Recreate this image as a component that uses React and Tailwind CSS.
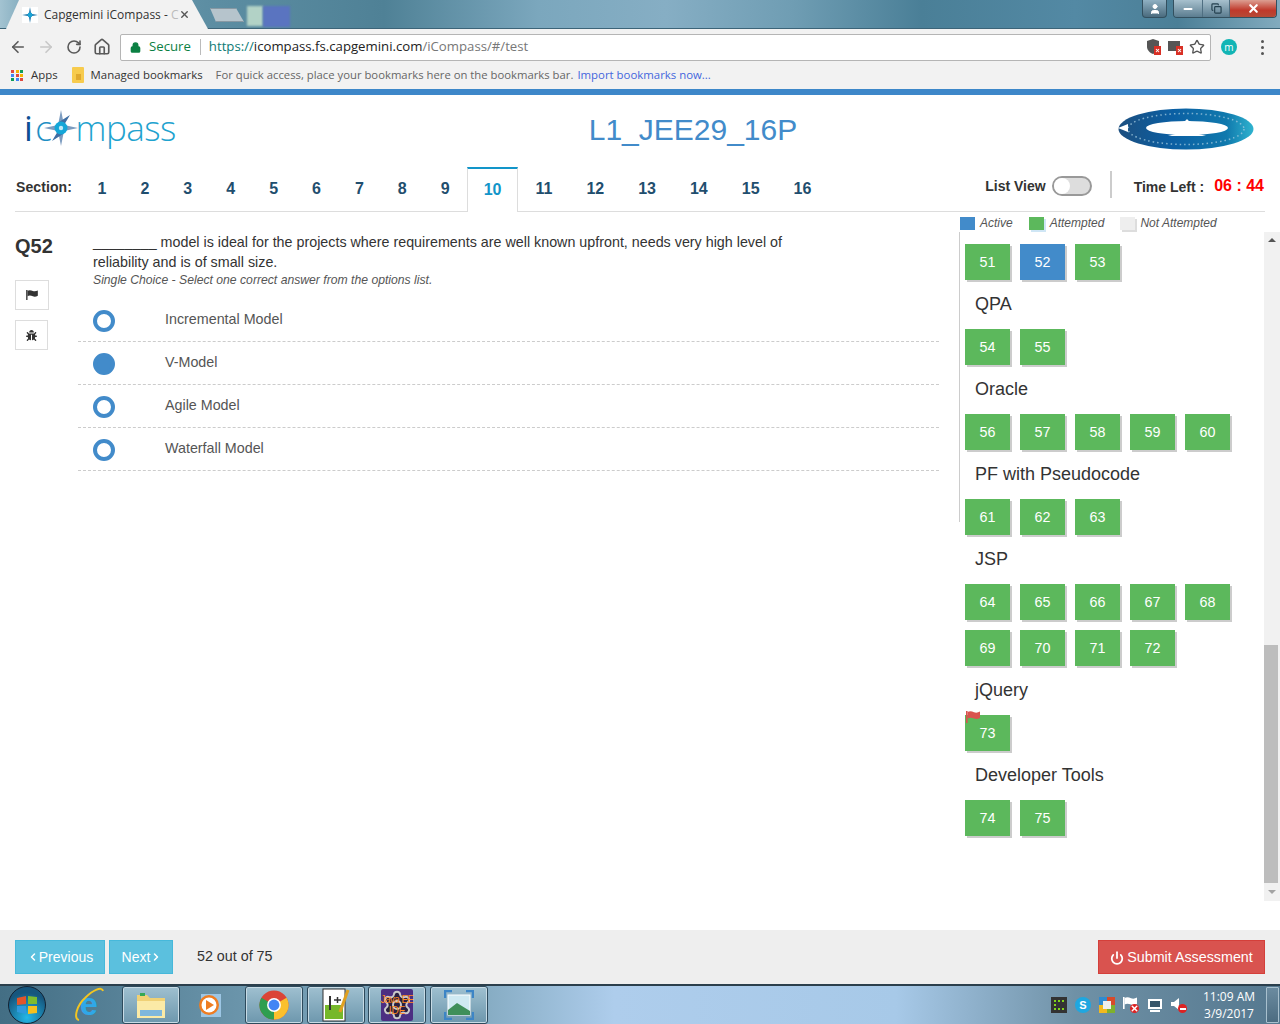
import { ArrowLeft, ArrowRight, RotateCw, House, Lock, Star, Power, ChevronLeft, ChevronRight, User, Minus, X, Copy, Settings } from "lucide-react";
import { FaBug } from "react-icons/fa";

const sectionNumbers = [1, 2, 3, 4, 5, 6, 7, 8, 9, 10, 11, 12, 13, 14, 15, 16];

const options = [
  { label: "Incremental Model", selected: false },
  { label: "V-Model", selected: true },
  { label: "Agile Model", selected: false },
  { label: "Waterfall Model", selected: false },
];

const groups = [
  { rows: [[51, 52, 53]] },
  { title: "QPA", rows: [[54, 55]] },
  { title: "Oracle", rows: [[56, 57, 58, 59, 60]] },
  { title: "PF with Pseudocode", rows: [[61, 62, 63]] },
  { title: "JSP", rows: [[64, 65, 66, 67, 68], [69, 70, 71, 72]] },
  { title: "jQuery", rows: [[73]] },
  { title: "Developer Tools", rows: [[74, 75]] },
];

function ChromeLogo({ size = 30 }) {
  return (
    <svg width={size} height={size} viewBox="0 0 32 32">
      <circle cx="16" cy="16" r="15.5" fill="#db4437" />
      <path d="M16 16 L29.4 8.2 A15.5 15.5 0 0 1 16 31.5 Z" fill="#fbc02d" />
      <path d="M16 16 L16 31.5 A15.5 15.5 0 0 1 2.6 8.2 Z" fill="#2e9e50" />
      <circle cx="16" cy="16" r="7.4" fill="#fff" />
      <circle cx="16" cy="16" r="5.8" fill="#4285f4" />
    </svg>
  );
}

function WavingFlag({ className }) {
  return (
    <svg width="14" height="12" viewBox="0 0 14 12" className={className}>
      <rect x="0" y="0" width="1.6" height="12" fill="currentColor" />
      <path d="M1.6 1 C4 -0.5 6 0.4 8 1.2 C10 2 12 1.6 14 0.6 V7 C12 8 10 8.4 8 7.6 C6 6.8 4 6 1.6 7.4 Z" fill="currentColor" />
    </svg>
  );
}

function ErrorBadge() {
  return (
    <span className="absolute right-0 bottom-0 w-[7px] h-[9px] bg-[#d93025] flex items-center justify-center">
      <X size={5} strokeWidth={5} className="text-white" />
    </span>
  );
}

function TitleBar() {
  return (
    <div className="relative h-[29px] shrink-0 flex bg-[linear-gradient(90deg,#a3c3d1_0%,#7fa9bc_2%,#5d8ea3_16%,#4f8196_30%,#7ba7bd_42%,#86aec4_52%,#6f9db3_62%,#4a7f97_72%,#5389a4_84%,#4b7f97_92%,#82abbe_100%)] border-b border-[#3c6478]">
      <div className="relative ml-[6px] w-[202px] h-[29px] -mb-px bg-[#f2f2f2] [clip-path:polygon(0_100%,13px_0,186px_0,202px_100%)] flex items-center pl-[16px]">
        <span className="shrink-0 w-[16px] h-[16px] bg-white flex items-center justify-center">
          <svg width="16" height="16" viewBox="0 0 16 16">
            <path d="M8 0 L9.3 6.7 L16 8 L9.3 9.3 L8 16 L6.7 9.3 L0 8 L6.7 6.7 Z" fill="#2f7fb0" />
            <circle cx="8" cy="8" r="2.4" fill="#19a5d6" />
          </svg>
        </span>
        <span className="ml-[6px] w-[131px] whitespace-nowrap font-['Open_Sans',sans-serif] text-[12px] text-[#333]">Capgemini iCompass - <span className="text-[#bbb]">C</span></span>
        <X size={11} strokeWidth={3} className="ml-[4px] text-[#555]" />
      </div>
      <div className="ml-[2px] mt-[8px] w-[34px] h-[14px] bg-[#b6c4cc] border border-[#8798a3] [clip-path:polygon(0_0,26px_0,100%_100%,6px_100%)]" />
      <div className="mt-[6px] ml-[3px] w-[16px] h-[20px] bg-[#b2d2c6] blur-[1px]" />
      <div className="mt-[6px] w-[27px] h-[21px] bg-[#5a74c0] blur-[1px]" />
      <div className="ml-auto mr-[3px] flex items-start">
        <div className="w-[25px] h-[18px] rounded-b-[4px] border border-t-0 border-[#33505f] bg-[linear-gradient(180deg,#8fb0c2,#4a6b7e)] flex items-center justify-center mr-[6px]">
          <User size={12} fill="#fff" className="text-white" />
        </div>
        <div className="flex h-[18px] rounded-b-[4px] border border-t-0 border-[#33505f] overflow-hidden">
          <div className="w-[29px] bg-[linear-gradient(180deg,#a7c0cd,#5b7d90)] flex items-center justify-center border-r border-[#4f6f82]">
            <Minus size={12} strokeWidth={4} className="text-white" />
          </div>
          <div className="w-[27px] bg-[linear-gradient(180deg,#a7c0cd,#5b7d90)] flex items-center justify-center border-r border-[#4f6f82]">
            <Copy size={11} strokeWidth={2.5} className="text-[#24404f]" />
          </div>
          <div className="w-[46px] bg-[linear-gradient(180deg,#dc9f92,#c0392b_60%,#b64a36)] flex items-center justify-center">
            <X size={13} strokeWidth={4} className="text-white" />
          </div>
        </div>
      </div>
    </div>
  );
}

function AddressBar() {
  return (
    <div className="h-[34px] pt-[2px] shrink-0 bg-[#f2f2f2] flex items-center pl-[9px]">
      <ArrowLeft size={18} strokeWidth={2.2} className="text-[#5a5a5a]" />
      <ArrowRight size={18} strokeWidth={2.2} className="ml-[10px] text-[#c8c8c8]" />
      <RotateCw size={16} strokeWidth={2.4} className="ml-[11px] text-[#5a5a5a]" />
      <House size={18} strokeWidth={2.2} className="ml-[11px] text-[#5a5a5a]" />
      <div className="ml-[9px] w-[1091px] h-[27px] bg-white border border-[#b5b5b5] rounded-[2px] flex items-center pl-[9px] font-['Open_Sans',sans-serif] text-[13.2px]">
        <Lock size={11} strokeWidth={3} fill="#0b8043" className="text-[#0b8043]" />
        <span className="ml-[8px] text-[#0b8043]">Secure</span>
        <span className="ml-[9px] w-px h-[16px] bg-[#bbb]" />
        <span className="ml-[8px] text-[#0b7a75]">https://<span className="text-[#222]">icompass.fs.capgemini.com</span><span className="text-[#777]">/iCompass/#/test</span></span>
        <div className="ml-auto mr-[5px] flex items-center gap-[6px]">
          <div className="relative w-[14px] h-[16px]">
            <svg width="12" height="15" viewBox="0 0 12 15"><path d="M6 0 L12 2 V8 C12 11 9 14 6 15 C3 14 0 11 0 8 V2 Z" fill="#555" /></svg>
            <ErrorBadge />
          </div>
          <div className="relative w-[15px] h-[16px] ml-[1px]">
            <span className="absolute left-0 top-[2px] w-[12px] h-[10px] bg-[#555]" />
            <ErrorBadge />
          </div>
          <Star size={16} strokeWidth={2} className="text-[#555]" />
        </div>
      </div>
      <div className="ml-[10px] w-[16px] h-[16px] rounded-full bg-[#12b5b5] flex items-center justify-center text-[10px] leading-none text-white font-['Open_Sans',sans-serif]">m</div>
      <div className="ml-[24px] flex flex-col gap-[3px]">
        <span className="w-[3px] h-[3px] bg-[#555] rounded-full" />
        <span className="w-[3px] h-[3px] bg-[#555] rounded-full" />
        <span className="w-[3px] h-[3px] bg-[#555] rounded-full" />
      </div>
    </div>
  );
}

function BookmarksBar() {
  const colors = ["#e04a3f", "#f4b400", "#0f9d58", "#4285f4", "#e04a3f", "#f4b400", "#0f9d58", "#4285f4", "#e04a3f"];
  return (
    <div className="h-[26px] pb-[2px] shrink-0 bg-[#f2f2f2] flex items-center pl-[11px] font-['Open_Sans',sans-serif] text-[11.4px] text-[#333]">
      <div className="grid grid-cols-3 gap-px w-[13px]">
        {colors.map((c, i) => (
          <span key={i} className="w-[3px] h-[3px]" style={{ backgroundColor: c }} />
        ))}
      </div>
      <span className="ml-[7px]">Apps</span>
      <svg width="12" height="16" viewBox="0 0 12 16" className="ml-[14px]">
        <rect width="12" height="16" rx="1" fill="#f7cb4d" />
        <rect x="4" y="7" width="5" height="6" fill="#e0a92e" />
      </svg>
      <span className="ml-[7px]">Managed bookmarks</span>
      <span className="ml-[13px] text-[11.3px] text-[#666]">For quick access, place your bookmarks here on the bookmarks bar.</span>
      <span className="ml-[4px] text-[#4466dd]">Import bookmarks now...</span>
    </div>
  );
}

function Logo() {
  return (
    <div className="-mt-[3px] flex items-center font-['Open_Sans',sans-serif] font-light text-[35px] leading-none text-[#1fa3cf] tracking-[-0.5px]">
      <span className="text-[#0d4f94] font-normal">i</span>
      <span className="ml-[3px] text-[#1f8fc4]">c</span>
      <svg width="34" height="36" viewBox="0 0 34 36" className="-ml-[7px] -mr-[3px] shrink-0">
        <path d="M17 0 L20 15 L34 18 L20 21 L17 36 L14 21 L0 18 L14 15 Z" fill="#7c9cc0" />
        <path d="M26 5 L20 15 L15 12 Z M8 31 L14 21 L19 24 Z" fill="#3f6ea3" />
        <circle cx="17" cy="18" r="6.5" fill="#14a6d8" />
        <circle cx="17" cy="18" r="2.2" fill="#bfe9f7" />
      </svg>
      <span>mpass</span>
    </div>
  );
}

function Emblem() {
  return (
    <svg width="136" height="44" viewBox="0 0 136 44">
      <defs>
        <linearGradient id="emblem" x1="0" x2="1" y1="0" y2="0">
          <stop offset="0" stopColor="#1c4f80" />
          <stop offset="0.4" stopColor="#0b5fa3" />
          <stop offset="0.8" stopColor="#1079ad" />
          <stop offset="1" stopColor="#2fb3cf" />
        </linearGradient>
      </defs>
      <ellipse cx="68" cy="22" rx="67.5" ry="20.5" fill="url(#emblem)" />
      <ellipse cx="68" cy="22" rx="58" ry="15.5" fill="none" stroke="#9cc5dc" strokeWidth="1.5" strokeDasharray="1.5 3" opacity="0.8" />
      <ellipse cx="69" cy="21" rx="41" ry="7" fill="#fff" />
      <path d="M69 12 C71 15 76 16 80 16 L58 16 C62 16 67 15 69 12 Z" fill="#fff" />
      <path d="M69 24 L88 29 L50 29 Z" fill="#fff" />
      <path d="M0 21 L10 17 L10 25 Z" fill="#fff" />
    </svg>
  );
}

function SectionBar() {
  return (
    <div className="h-[45px] shrink-0 mx-[15px] border-b border-[#ddd] flex items-stretch">
      <span className="mt-[12px] ml-px w-[64.5px] text-[14px] leading-[16px] font-bold text-[#333] tracking-[0.1px]">Section:</span>
      <div className="flex items-stretch h-[45px]">
        {sectionNumbers.map((n) =>
          n === 10 ? (
            <span key={n} className="px-[16px] border-x border-[#ddd] border-t-2 border-t-[#1295c9] bg-white text-[16px] font-bold text-[#1295c9] pt-[12px] leading-[18px]">{n}</span>
          ) : (
            <span key={n} className="px-[17px] text-[16px] font-bold text-[#1f4e6e] pt-[13px] leading-[18px]">{n}</span>
          )
        )}
      </div>
      <div className="ml-auto mr-px flex items-start">
        <span className="mt-[11px] text-[14px] leading-[16px] font-bold text-[#333]">List View</span>
        <div className="mt-[9px] ml-[6px] w-[40px] h-[20px] rounded-full border-2 border-[#999] bg-[#ddd] flex items-center">
          <span className="w-[16px] h-[16px] rounded-full bg-white" />
        </div>
        <span className="mt-[4px] ml-[18px] w-[2px] h-[27px] bg-[#ccc]" />
        <span className="mt-[12px] ml-[22px] text-[14px] leading-[16px] font-bold text-[#333]">Time Left :</span>
        <span className="mt-[11px] ml-[10px] text-[16px] leading-[16px] font-bold text-[#f00]">06 : 44</span>
      </div>
    </div>
  );
}

function Question() {
  return (
    <div className="w-[945px] shrink-0 pl-[15px] flex items-start">
      <div className="w-[63px] shrink-0 pt-[22px]">
        <div className="text-[20px] leading-[24px] font-bold text-[#333]">Q52</div>
        <div className="mt-[22px] w-[34px] h-[30px] border border-[#ddd] flex items-center justify-center">
          <WavingFlag className="w-[12px] h-[10px] text-[#333]" />
        </div>
        <div className="mt-[10px] w-[33px] h-[30px] border border-[#ddd] flex items-center justify-center">
          <FaBug size={11} className="text-[#333]" />
        </div>
      </div>
      <div className="w-[861px] pt-[20px]">
        <div className="pl-[15px] w-[730px] text-[14.3px] leading-[20px] text-[#333]">
          <p>________ model is ideal for the projects where requirements are well known upfront, needs very high level of reliability and is of small size.</p>
          <p className="text-[12.2px] leading-[16px] italic text-[#555]">Single Choice - Select one correct answer from the options list.</p>
        </div>
        <div className="mt-[11px]">
          {options.map((o) => (
            <div key={o.label} className="h-[43px] border-b border-dashed border-[#ccc] flex items-center pl-[15px] pt-[2px]">
              <span className={`w-[22px] h-[22px] rounded-full border-[4px] border-[#428bca] ${o.selected ? "bg-[#428bca]" : "bg-white"}`} />
              <span className="ml-[50px] -mt-[3px] text-[14.3px] text-[#555]">{o.label}</span>
            </div>
          ))}
        </div>
      </div>
    </div>
  );
}

function Palette() {
  return (
    <div className="flex-1 min-w-0 flex flex-col">
      <div className="h-[20px] pt-[2px] pl-[15px] flex items-center text-[12px] italic text-[#555]">
        <span className="w-[15px] h-[13px] bg-[#428bca]" />
        <span className="ml-[5px]">Active</span>
        <span className="ml-[16px] w-[15px] h-[13px] bg-[#5cb85c] shadow-[2px_2px_0_#cfe6f5]" />
        <span className="ml-[6px]">Attempted</span>
        <span className="ml-[16px] w-[15px] h-[13px] bg-[#eee] shadow-[2px_2px_0_#ddd]" />
        <span className="ml-[5px]">Not Attempted</span>
      </div>
      <div className="flex h-[669px]">
        <div className="flex-1 min-w-0 pl-[14px]">
          <div className="relative pl-[6px] pt-[12px]">
            <span className="absolute left-0 top-0 w-px h-[290px] bg-[#ccc]" />
            {groups.map((g, i) => (
              <div key={i}>
                {g.title && <h3 className="h-[39px] pl-[10px] text-[18px] leading-[28px] text-[#333]">{g.title}</h3>}
                {g.rows.map((row, j) => (
                  <div key={j} className="flex gap-[10px] mb-[10px]">
                    {row.map((n) => (
                      <div key={n} className={`relative w-[45px] h-[36px] pt-[2px] flex items-center justify-center text-[14.3px] text-white shadow-[2px_2px_0_#ccc] ${n === 52 ? "bg-[#428bca]" : "bg-[#5cb85c]"}`}>
                        {n === 73 && <WavingFlag className="absolute left-[1px] -top-[4px] text-[#d9534f]" />}
                        {n}
                      </div>
                    ))}
                  </div>
                ))}
              </div>
            ))}
          </div>
        </div>
        <div className="w-[16px] shrink-0 bg-[#f1f1f1] flex flex-col items-center">
          <span className="mt-[6px] w-0 h-0 border-x-[4px] border-x-transparent border-b-[4px] border-b-[#555]" />
          <span className="mt-[403px] self-start w-[14px] h-[238px] bg-[#bdbdbd]" />
          <span className="mt-[7px] w-0 h-0 border-x-[4px] border-x-transparent border-t-[4px] border-t-[#a3a3a3]" />
        </div>
      </div>
    </div>
  );
}

function Footer() {
  return (
    <div className="h-[54px] shrink-0 bg-[#eee] flex items-center px-[15px] text-[14px]">
      <button className="h-[34px] w-[90px] bg-[#5bc0de] border border-[#46b8da] text-white flex items-center justify-center">
        <ChevronLeft size={12} strokeWidth={3} />
        <span>Previous</span>
      </button>
      <button className="ml-[4px] h-[34px] w-[64px] pl-[2px] bg-[#5bc0de] border border-[#46b8da] text-white flex items-center justify-center">
        <span>Next</span>
        <ChevronRight size={12} strokeWidth={3} />
      </button>
      <span className="ml-[24px] text-[14.3px] text-[#333]">52 out of 75</span>
      <button className="ml-auto h-[34px] w-[167px] pt-[2px] bg-[#d9534f] border border-[#d43f3a] text-[14.3px] text-white flex items-center justify-center gap-[3px]">
        <Power size={14} strokeWidth={3} />
        <span>Submit Assessment</span>
      </button>
    </div>
  );
}

function TaskButton({ children }) {
  return (
    <div className="w-[58px] h-[38px] rounded-[3px] border border-[#2d4a5c] bg-[linear-gradient(180deg,#9fc0d0,#6d97ad)] shadow-[inset_0_0_0_1px_#c7dbe5] flex items-center justify-center">
      {children}
    </div>
  );
}

function Tray() {
  return (
    <div className="flex items-center gap-[8px] text-white">
      <span className="w-[16px] h-[16px] bg-[#333] flex items-center justify-center">
        <span className="w-[10px] h-[10px] border-2 border-r-0 border-dotted border-[#7fd51b]" />
      </span>
      <span className="w-[16px] h-[16px] rounded-full bg-[#1fa7e0] text-[11px] leading-[16px] font-bold text-center">S</span>
      <span className="w-[16px] h-[16px] bg-[conic-gradient(#d84a2a_25%,#7fb12c_25%_50%,#f2b91e_50%_75%,#2f8bd0_75%)] flex items-center justify-center">
        <span className="w-[8px] h-[8px] bg-[#eee]" />
      </span>
      <span className="relative w-[16px] h-[16px]">
        <WavingFlag className="text-white" />
        <X size={9} strokeWidth={4} className="absolute right-0 bottom-0 rounded-full bg-[#d22] text-white" />
      </span>
      <span className="flex flex-col items-center w-[16px]">
        <span className="w-[14px] h-[10px] border-2 border-white bg-[#37566a]" />
        <span className="w-[10px] h-[2px] mt-[1px] bg-white" />
      </span>
      <span className="relative w-[16px] h-[16px]">
        <svg width="11" height="14" viewBox="0 0 11 14"><path d="M0 5 H3 L8 1 V13 L3 9 H0 Z" fill="#fff" /></svg>
        <span className="absolute right-0 bottom-0 w-[9px] h-[9px] rounded-full bg-[#d22] flex items-center justify-center">
          <span className="w-[6px] h-[2px] bg-white" />
        </span>
      </span>
    </div>
  );
}

function Taskbar() {
  return (
    <div className="h-[40px] shrink-0 border-t-2 border-[#2b3f4c] bg-[linear-gradient(90deg,#436e84_0%,#6d97ad_20%,#86acc3_38%,#aecdec_48%,#a7c9e8_70%,#6f91a6_84%,#55788f_100%)] flex items-center overflow-hidden">
      <div className="ml-[8px] w-[38px] h-[38px] rounded-full border border-[#123] bg-[radial-gradient(circle_at_50%_85%,#22b8e8,#16567d_70%)] flex items-center justify-center">
        <svg width="22" height="20" viewBox="0 0 22 20">
          <path d="M1 3 L10 1 V9 L1 10 Z" fill="#e2552b" />
          <path d="M12 1 L21 2 V9 L12 9 Z" fill="#7dbb2f" />
          <path d="M1 11 L10 11 V19 L1 17 Z" fill="#2f9ade" />
          <path d="M12 11 L21 11 V18 L12 19 Z" fill="#f4c01e" />
        </svg>
      </div>
      <div className="relative ml-[27px] w-[32px] h-[36px] flex items-center justify-center">
        <span className="font-bold text-[32px] leading-none text-[#2fa8e8] -mt-[3px]">e</span>
        <svg width="32" height="36" viewBox="0 0 32 36" className="absolute left-0 top-0">
          <path d="M6 33 C0 32 4 18 12 11 C20 3 29 -1 30 4" fill="none" stroke="#f2c521" strokeWidth="2" />
        </svg>
      </div>
      <div className="ml-[17px]">
        <TaskButton>
          <svg width="32" height="32" viewBox="0 0 32 32">
            <path d="M2 6 H12 L15 9 H30 V29 H2 Z" fill="#f0d175" />
            <rect x="2" y="12" width="28" height="17" fill="#fbeaa6" />
            <rect x="5" y="21" width="22" height="6" fill="#7fb7dc" />
            <rect x="5" y="4" width="5" height="3" fill="#35a853" />
          </svg>
        </TaskButton>
      </div>
      <div className="ml-[15px] w-[30px] h-[30px] flex items-center justify-center">
        <svg width="28" height="28" viewBox="0 0 28 28">
          <rect x="5" y="3" width="20" height="23" fill="#9cc6e4" />
          <circle cx="13" cy="14" r="10" fill="#ee7d22" />
          <circle cx="13" cy="14" r="7.5" fill="#fff" />
          <path d="M10 9 L18 14 L10 19 Z" fill="#ee7d22" />
        </svg>
      </div>
      <div className="ml-[20px]">
        <TaskButton><ChromeLogo /></TaskButton>
      </div>
      <div className="ml-[4px]">
        <TaskButton>
          <svg width="30" height="34" viewBox="0 0 30 34">
            <rect x="2" y="1" width="22" height="32" fill="#fff" stroke="#333" />
            <rect x="4" y="17" width="18" height="14" fill="#76b82a" />
            <rect x="8" y="8" width="2" height="14" fill="#333" />
            <path d="M13 12 H20 M16.5 9 V15" stroke="#333" strokeWidth="1.5" />
            <path d="M27 2 L19 24" stroke="#e0a020" strokeWidth="3" />
          </svg>
        </TaskButton>
      </div>
      <div className="ml-[3px]">
        <TaskButton>
          <div className="relative w-[32px] h-[32px] bg-[#4c2f82] flex flex-col items-center justify-center text-[10px] leading-[11px] text-[#ff8a1f] rounded-[2px] whitespace-nowrap">
            <Settings size={32} strokeWidth={1.5} fill="#2a2040" className="absolute left-0 top-0 text-[#c9c9c9]" />
            <span className="relative tracking-[-0.6px]">Java EE</span>
            <span className="relative">IDE</span>
          </div>
        </TaskButton>
      </div>
      <div className="ml-[4px]">
        <TaskButton>
          <svg width="30" height="30" viewBox="0 0 30 30">
            <rect x="4" y="5" width="22" height="20" fill="#cfe9f2" stroke="#fff" />
            <path d="M4 20 L13 13 L26 21 V25 H4 Z" fill="#3f8f5a" />
            <path d="M1 8 V1 H8 M22 1 H29 V8 M29 22 V29 H22 M8 29 H1 V22" fill="none" stroke="#3d85c6" strokeWidth="2.5" />
          </svg>
        </TaskButton>
      </div>
      <div className="ml-auto flex items-center">
        <Tray />
        <div className="ml-[11px] w-[62px] text-center font-['Open_Sans',sans-serif] text-[12px] leading-[17px] text-white">
          <div>11:09 AM</div>
          <div>3/9/2017</div>
        </div>
        <div className="ml-[6px] mr-px w-[13px] h-[36px] border border-[#a8c0ce] bg-[linear-gradient(180deg,#6b8ba0,#4c6c81)] rounded-[1px]" />
      </div>
    </div>
  );
}

export default function App() {
  return (
    <div className="w-[1280px] h-[1024px] flex flex-col overflow-hidden bg-white font-['Liberation_Sans',Arial,sans-serif]">
      <TitleBar />
      <AddressBar />
      <BookmarksBar />
      <div className="h-[6px] shrink-0 bg-[#3d87c9]" />
      <div className="flex-1 min-h-0 flex flex-col">
        <div className="h-[72px] pb-[4px] shrink-0 flex items-center pl-[24px] pr-[26px]">
          <div className="w-[300px]"><Logo /></div>
          <div className="flex-1 text-center pl-[108px] text-[30px] text-[#428bca]">L1_JEE29_16P</div>
          <div className="w-[300px] flex justify-end"><Emblem /></div>
        </div>
        <SectionBar />
        <div className="flex-1 min-h-0 flex">
          <Question />
          <Palette />
        </div>
      </div>
      <Footer />
      <Taskbar />
    </div>
  );
}
